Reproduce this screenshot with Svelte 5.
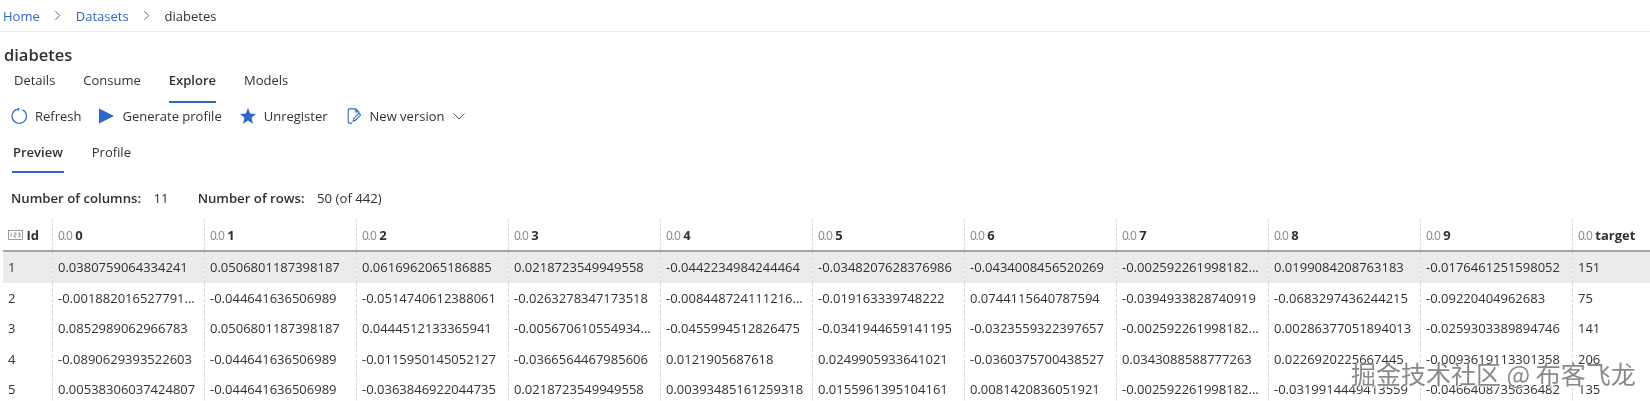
<script>
    const columns = ['0', '1', '2', '3', '4', '5', '6', '7', '8', '9', 'target'];

    const rows = [
        ['1', '0.0380759064334241', '0.0506801187398187', '0.0616962065186885', '0.0218723549949558', '-0.0442234984244464', '-0.0348207628376986', '-0.0434008456520269', '-0.002592261998182...', '0.0199084208763183', '-0.0176461251598052', '151'],
        ['2', '-0.001882016527791...', '-0.044641636506989', '-0.0514740612388061', '-0.0263278347173518', '-0.008448724111216...', '-0.019163339748222', '0.0744115640787594', '-0.0394933828740919', '-0.0683297436244215', '-0.09220404962683', '75'],
        ['3', '0.0852989062966783', '0.0506801187398187', '0.0444512133365941', '-0.005670610554934...', '-0.0455994512826475', '-0.0341944659141195', '-0.0323559322397657', '-0.002592261998182...', '0.00286377051894013', '-0.0259303389894746', '141'],
        ['4', '-0.0890629393522603', '-0.044641636506989', '-0.0115950145052127', '-0.0366564467985606', '0.0121905687618', '0.0249905933641021', '-0.0360375700438527', '0.0343088588777263', '0.0226920225667445', '-0.0093619113301358', '206'],
        ['5', '0.00538306037424807', '-0.044641636506989', '-0.0363846922044735', '0.0218723549949558', '0.00393485161259318', '0.0155961395104161', '0.0081420836051921', '-0.002592261998182...', '-0.0319914449413559', '-0.0466408735636482', '135']
    ];
</script>

<div class="page">
    <nav class="crumbs">
        <a href="#home">Home</a>
        <svg class="sep" viewBox="0 0 8 12"><path d="M1.5 1l5 5-5 5" /></svg>
        <a href="#datasets">Datasets</a>
        <svg class="sep" viewBox="0 0 8 12"><path d="M1.5 1l5 5-5 5" /></svg>
        <span>diabetes</span>
    </nav>

    <h1>diabetes</h1>

    <div class="tabs">
        <span>Details</span>
        <span>Consume</span>
        <span class="active">Explore</span>
        <span>Models</span>
    </div>

    <div class="toolbar">
        <button>
            <svg viewBox="0 0 16 16" class="icon line"><path d="M11.500 1.700a7.200 7.200 0 1 1-4.800-.6" /><path d="M6.700 1.100l1.700-.9M6.700 1.100l1.300 1.400" /></svg>
            Refresh
        </button>
        <button>
            <svg viewBox="0 0 16 16" class="icon play"><path d="M0 0l16 8-16 8z" /></svg>
            Generate profile
        </button>
        <button>
            <svg viewBox="0 0 16 16" class="icon"><path d="M8 0l2.200 5.600 5.800.4-4.500 3.800 1.500 5.900L8 12.500l-5 3.200 1.500-5.900L0 6l5.800-.4z" /></svg>
            Unregister
        </button>
        <button>
            <svg viewBox="0 0 16 18" class="icon line doc"><path d="M6 1H2.500a1 1 0 0 0-1 1v14a1 1 0 0 0 1 1H6M6 1h4l3.500 3.500V7M10 1v3.500h3.500M7 15l1-3.500 5.500-5.500 2 2-5.500 5.500z" /></svg>
            New version
            <svg class="chev" viewBox="0 0 12 7"><path d="M.5.5L6 6 11.500.5" /></svg>
        </button>
    </div>

    <div class="subtabs">
        <span class="active">Preview</span>
        <span>Profile</span>
    </div>

    <div class="counts">
        <span><b>Number of columns:</b> 11</span>
        <span><b>Number of rows:</b> 50 (of 442)</span>
    </div>

    <table>
        <colgroup>
            <col class="id-col" />
            {#each columns as c}
                <col class="data-col" />
            {/each}
        </colgroup>
        <thead>
            <tr>
                <th>
                    <svg class="num-icon" viewBox="0 0 15 10"><rect x=".5" y=".5" width="14" height="9" /><path d="M3 3v4M6 3h2v2H6v2h2M10 3h2v4h-2M10 5h2" /></svg>
                    Id
                </th>
                {#each columns as c}
                    <th><i>0.0</i> {c}</th>
                {/each}
            </tr>
        </thead>
        <tbody>
            {#each rows as row, i}
                <tr class:selected={i === 0}>
                    {#each row as cell}
                        <td>{cell}</td>
                    {/each}
                </tr>
            {/each}
        </tbody>
    </table>

    <div class="watermark">掘金技术社区 @ 布客飞龙</div>
</div>

<style>
    :global(body) { background: #fff; }
    .page { position: relative; height: 401px; overflow: hidden; font-family: "Open Sans", "Liberation Sans", sans-serif; font-size: 13px; color: #323130; filter: blur(.3px); }

    .crumbs { height: 31px; border-bottom: 1px solid #edebe9; display: flex; align-items: center; padding-left: 3px; }
    .crumbs a { color: #2f67c5; text-decoration: none; }
    .sep { width: 7px; height: 11px; margin: 0 14.500px; fill: none; stroke: #555; stroke-width: 1; }

    h1 { margin: 12px 0 0 4px; font-size: 16.500px; line-height: 22px; font-weight: 600; color: #323130; }

    .tabs { display: flex; gap: 28px; margin-top: 4px; padding-left: 14px; height: 33px; }
    .tabs span { line-height: 20px; box-sizing: border-box; }
    .tabs .active { border-bottom: 2px solid #2f67c5; font-weight: 600; }

    .toolbar { display: flex; align-items: center; margin-top: 1px; padding-left: 11px; height: 24px; gap: 18px; }
    .toolbar button { display: flex; align-items: center; gap: 8px; border: 0; padding: 0; background: none; font: inherit; color: inherit; }
    .icon { width: 16px; height: 16px; fill: #2f67c5; }
    .icon.play { width: 15px; }
    .icon.line { fill: none; stroke: #2f67c5; stroke-width: 1.200; }
    .chev { width: 12px; height: 7px; fill: none; stroke: #555; margin-left: 1px; }

    .subtabs { display: flex; gap: 27px; margin-top: 14px; padding-left: 12px; height: 31px; }
    .subtabs span { padding: 0 1px; line-height: 20px; box-sizing: border-box; }
    .subtabs .active { border-bottom: 2px solid #2f67c5; font-weight: 600; }

    .counts { display: flex; gap: 29px; padding-left: 11px; margin-top: 15px; line-height: 20px; font-size: 13.200px; }
    .counts b { font-weight: 600; margin-right: 9px; }

    table { margin: 11px 0 0 3px; border-collapse: collapse; table-layout: fixed; width: 1647px; }
    .id-col { width: 49.500px; }
    .data-col { width: 152px; }
    th, td { padding: 0 0 0 5px; text-align: left; white-space: nowrap; overflow: hidden; }
    th { height: 31px; border-bottom: 2px solid #a8a6a4; font-weight: 700; font-size: 13px; }
    th + th { border-left: 1px dashed #d8d6d4; }
    th i { font-style: normal; font-weight: 400; font-size: 12px; color: #8a8886; letter-spacing: -1px; }
    td { height: 30.500px; }
    td + td { border-left: 1px dashed #d8d6d4; }
    .selected td { background: #edebe9; }
    .num-icon { width: 15px; height: 10px; fill: none; stroke: #777; stroke-width: .7; }

    .watermark { position: absolute; left: 1351px; top: 356px; font-family: "Noto Sans CJK SC", sans-serif; font-size: 25px; line-height: 34px; color: #8a8a8a; white-space: nowrap; text-shadow: 1px 1px 1px #fff; }
</style>
